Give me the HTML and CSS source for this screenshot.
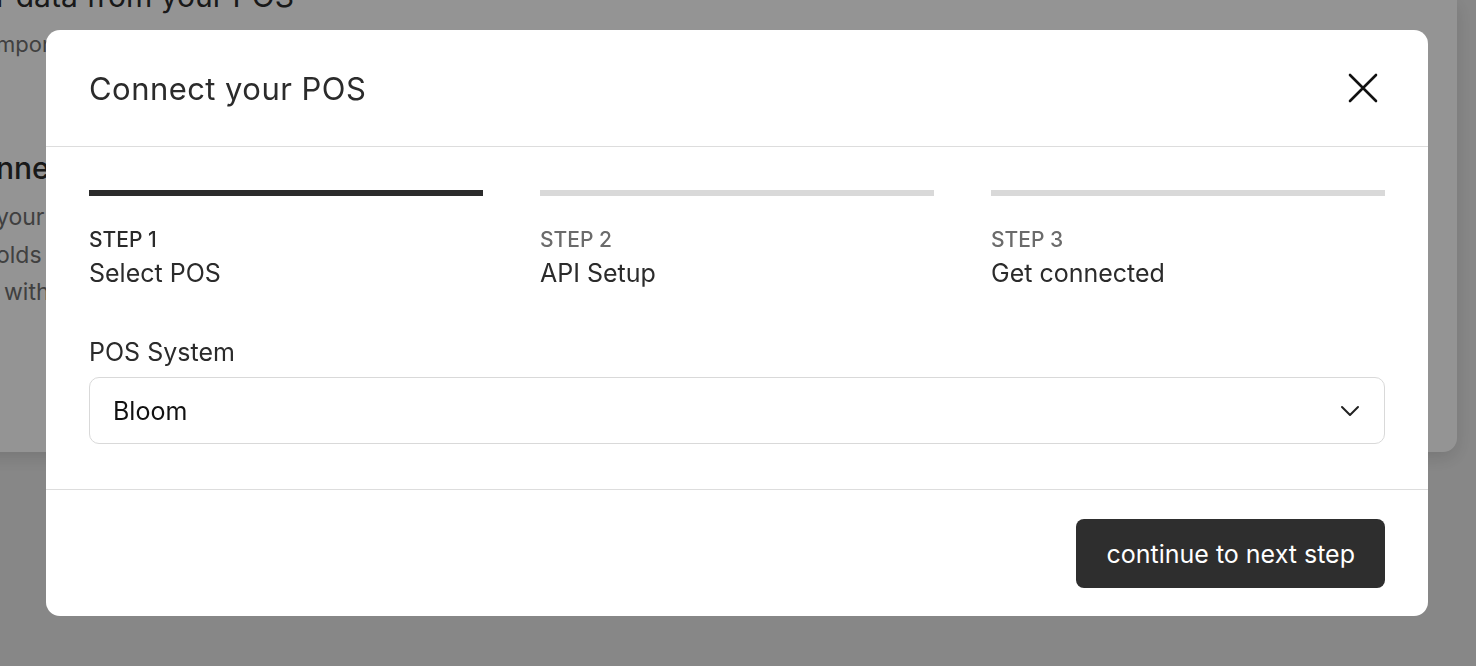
FILE: index.html
```html
<!DOCTYPE html>
<html lang="en">
<head>
<meta charset="utf-8">
<title>Connect your POS</title>
<link rel="stylesheet" href="styles.css">
</head>
<body>
<div class="page">
  <div class="bg-card">
    <div class="bg-section">
      <h2 class="bg-title">r data from your POS</h2>
      <p class="bg-sub">mport your sales and orders automatically</p>
    </div>
    <div class="bg-section second">
      <h2 class="bg-title strong">nnect your POS</h2>
      <p class="bg-line first">your point of sale system</p>
      <p class="bg-line">olds all of your order data</p>
      <p class="bg-line indent">with a few clicks</p>
    </div>
  </div>
</div>

<div class="overlay">
  <div class="modal" role="dialog" aria-labelledby="modal-title">
    <header class="modal-header">
      <h1 id="modal-title" class="modal-title">Connect your POS</h1>
      <button class="close-btn" aria-label="Close">
        <svg width="32" height="32" viewBox="0 0 32 32" fill="none" stroke="#111" stroke-width="2.6" stroke-linecap="round">
          <path d="M3 3 L29 29 M29 3 L3 29"/>
        </svg>
      </button>
    </header>

    <div class="modal-body">
      <ol class="steps">
        <li class="step active">
          <div class="step-bar"></div>
          <div class="step-num">STEP 1</div>
          <div class="step-name">Select POS</div>
        </li>
        <li class="step">
          <div class="step-bar"></div>
          <div class="step-num">STEP 2</div>
          <div class="step-name">API Setup</div>
        </li>
        <li class="step">
          <div class="step-bar"></div>
          <div class="step-num">STEP 3</div>
          <div class="step-name">Get connected</div>
        </li>
      </ol>

      <label class="field-label">POS System</label>
      <div class="select">
        <span class="select-value">Bloom</span>
        <svg class="chevron" width="20" height="12" viewBox="0 0 20 12" fill="none" stroke="#222" stroke-width="2" stroke-linecap="round" stroke-linejoin="round">
          <path d="M2 2 L10 10 L18 2"/>
        </svg>
      </div>
    </div>

    <footer class="modal-footer">
      <button class="primary-btn">continue to next step</button>
    </footer>
  </div>
</div>
</body>
</html>
```

FILE: styles.css
```css
* {
  box-sizing: border-box;
}

html, body {
  margin: 0;
  padding: 0;
  height: 100%;
}

body {
  background: #e9e9e9;
  font-family: "Inter", "Noto Sans", "Liberation Sans", sans-serif;
  color: #2b2b2b;
  overflow: hidden;
}

/* ---------- background page ---------- */
.page {
  height: 100%;
  padding-right: 19px;
}

.bg-card {
  display: flow-root;
  background: #ffffff;
  height: 452px;
  margin-left: -20px;
  border-radius: 0 0 14px 0;
  box-shadow: 0 6px 18px rgba(0, 0, 0, 0.12);
  padding-left: 16px;
}

.bg-title {
  margin: -22px 0 0;
  font-size: 30px;
  line-height: 36px;
  font-weight: 400;
  color: #2b2b2b;
}

.bg-title.strong {
  font-weight: 500;
  margin-top: 0;
}

.bg-sub {
  margin: 16px 0 0;
  font-size: 22px;
  line-height: 28px;
  color: #6e6e6e;
}

.second {
  padding-top: 92px;
}

.bg-line {
  margin: 0;
  font-size: 23px;
  line-height: 37.5px;
  color: #6e6e6e;
}

.bg-line.first {
  margin-top: 13px;
}

.bg-line.indent {
  padding-left: 8px;
}

/* ---------- overlay + modal ---------- */
.overlay {
  position: fixed;
  inset: 0;
  background: rgba(0, 0, 0, 0.42);
  display: flex;
  align-items: flex-start;
  padding: 30px 0 0 46px;
}

.modal {
  width: 1382px;
  background: #ffffff;
  border-radius: 14px;
  overflow: hidden;
}

.modal-header {
  height: 117px;
  display: flex;
  align-items: center;
  justify-content: space-between;
  padding: 0 49px 0 43px;
  border-bottom: 1px solid #dddddd;
}

.modal-title {
  margin: 0;
  font-size: 31px;
  font-weight: 400;
  letter-spacing: 0.45px;
  color: #2b2b2b;
}

.close-btn {
  border: 0;
  background: none;
  padding: 0;
  width: 32px;
  height: 32px;
  display: flex;
  cursor: pointer;
}

.modal-body {
  padding: 43px 43px 45px;
  border-bottom: 1px solid #dddddd;
}

.steps {
  list-style: none;
  margin: 0;
  padding: 0;
  display: grid;
  grid-template-columns: repeat(3, 1fr);
  column-gap: 57px;
}

.step-bar {
  height: 6px;
  background: #d9d9d9;
}

.step.active .step-bar {
  background: #2b2b2b;
}

.step-num {
  margin-top: 31px;
  font-size: 21px;
  line-height: 26px;
  font-weight: 500;
  color: #6b6b6b;
}

.step.active .step-num {
  color: #2b2b2b;
}

.step-name {
  margin-top: 5px;
  font-size: 25px;
  line-height: 31px;
  color: #2b2b2b;
}

.field-label {
  display: block;
  margin-top: 48px;
  font-size: 25px;
  line-height: 31px;
  color: #2b2b2b;
}

.select {
  margin-top: 9px;
  height: 67px;
  border: 1px solid #d9d9d9;
  border-radius: 10px;
  display: flex;
  align-items: center;
  justify-content: space-between;
  padding: 0 24px 0 23px;
}

.select-value {
  font-size: 25px;
  color: #111111;
}

.chevron {
  display: block;
}

.modal-footer {
  display: flex;
  justify-content: flex-end;
  padding: 29px 43px 28px;
}

.primary-btn {
  height: 69px;
  padding: 0 30px;
  border: 0;
  border-radius: 8px;
  background: #2e2e2e;
  color: #ffffff;
  font-family: inherit;
  font-size: 25px;
  cursor: pointer;
}
```
